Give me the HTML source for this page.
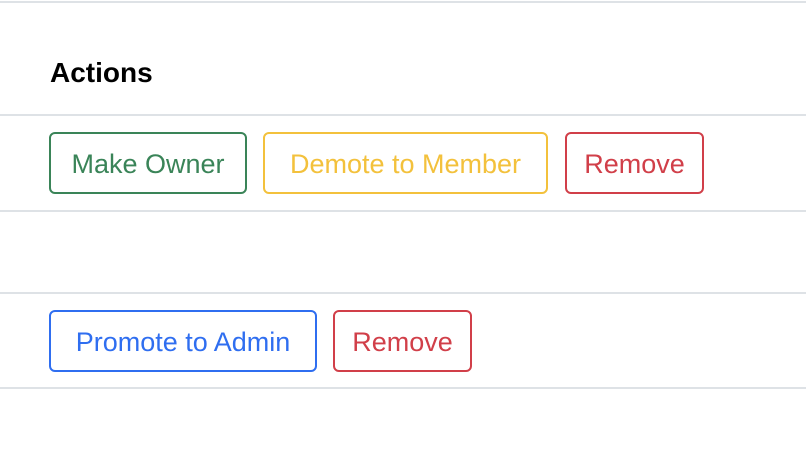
<!DOCTYPE html>
<html><head><style>
body{margin:0;width:806px;height:460px;background:#fff;font-family:"Liberation Sans",Arial,sans-serif;position:relative;overflow:hidden}
.line{position:absolute;left:0;width:806px;height:2px;background:#dee2e6}
.h{position:absolute;left:50px;top:57px;font-weight:bold;font-size:28px;color:#000}
.b{position:absolute;box-sizing:border-box;height:62px;border:2px solid;border-radius:6px;font-size:27px;display:flex;align-items:center;justify-content:center;background:#fff;padding-top:2px;white-space:nowrap}
.g{color:#3a8458;border-color:#3a8458}
.y{color:#f3c13c;border-color:#f3c13c}
.r{color:#d13f49;border-color:#d13f49}
.bl{color:#2f6ef0;border-color:#2f6ef0}
</style></head><body>
<div class="line" style="top:1px"></div>
<div class="h">Actions</div>
<div class="line" style="top:114px"></div>
<div class="b g" style="left:49px;top:132px;width:198px">Make Owner</div>
<div class="b y" style="left:263px;top:132px;width:285px">Demote to Member</div>
<div class="b r" style="left:565px;top:132px;width:139px">Remove</div>
<div class="line" style="top:210px"></div>
<div class="line" style="top:292px"></div>
<div class="b bl" style="left:49px;top:310px;width:268px">Promote to Admin</div>
<div class="b r" style="left:333px;top:310px;width:139px">Remove</div>
<div class="line" style="top:387px"></div>
</body></html>
